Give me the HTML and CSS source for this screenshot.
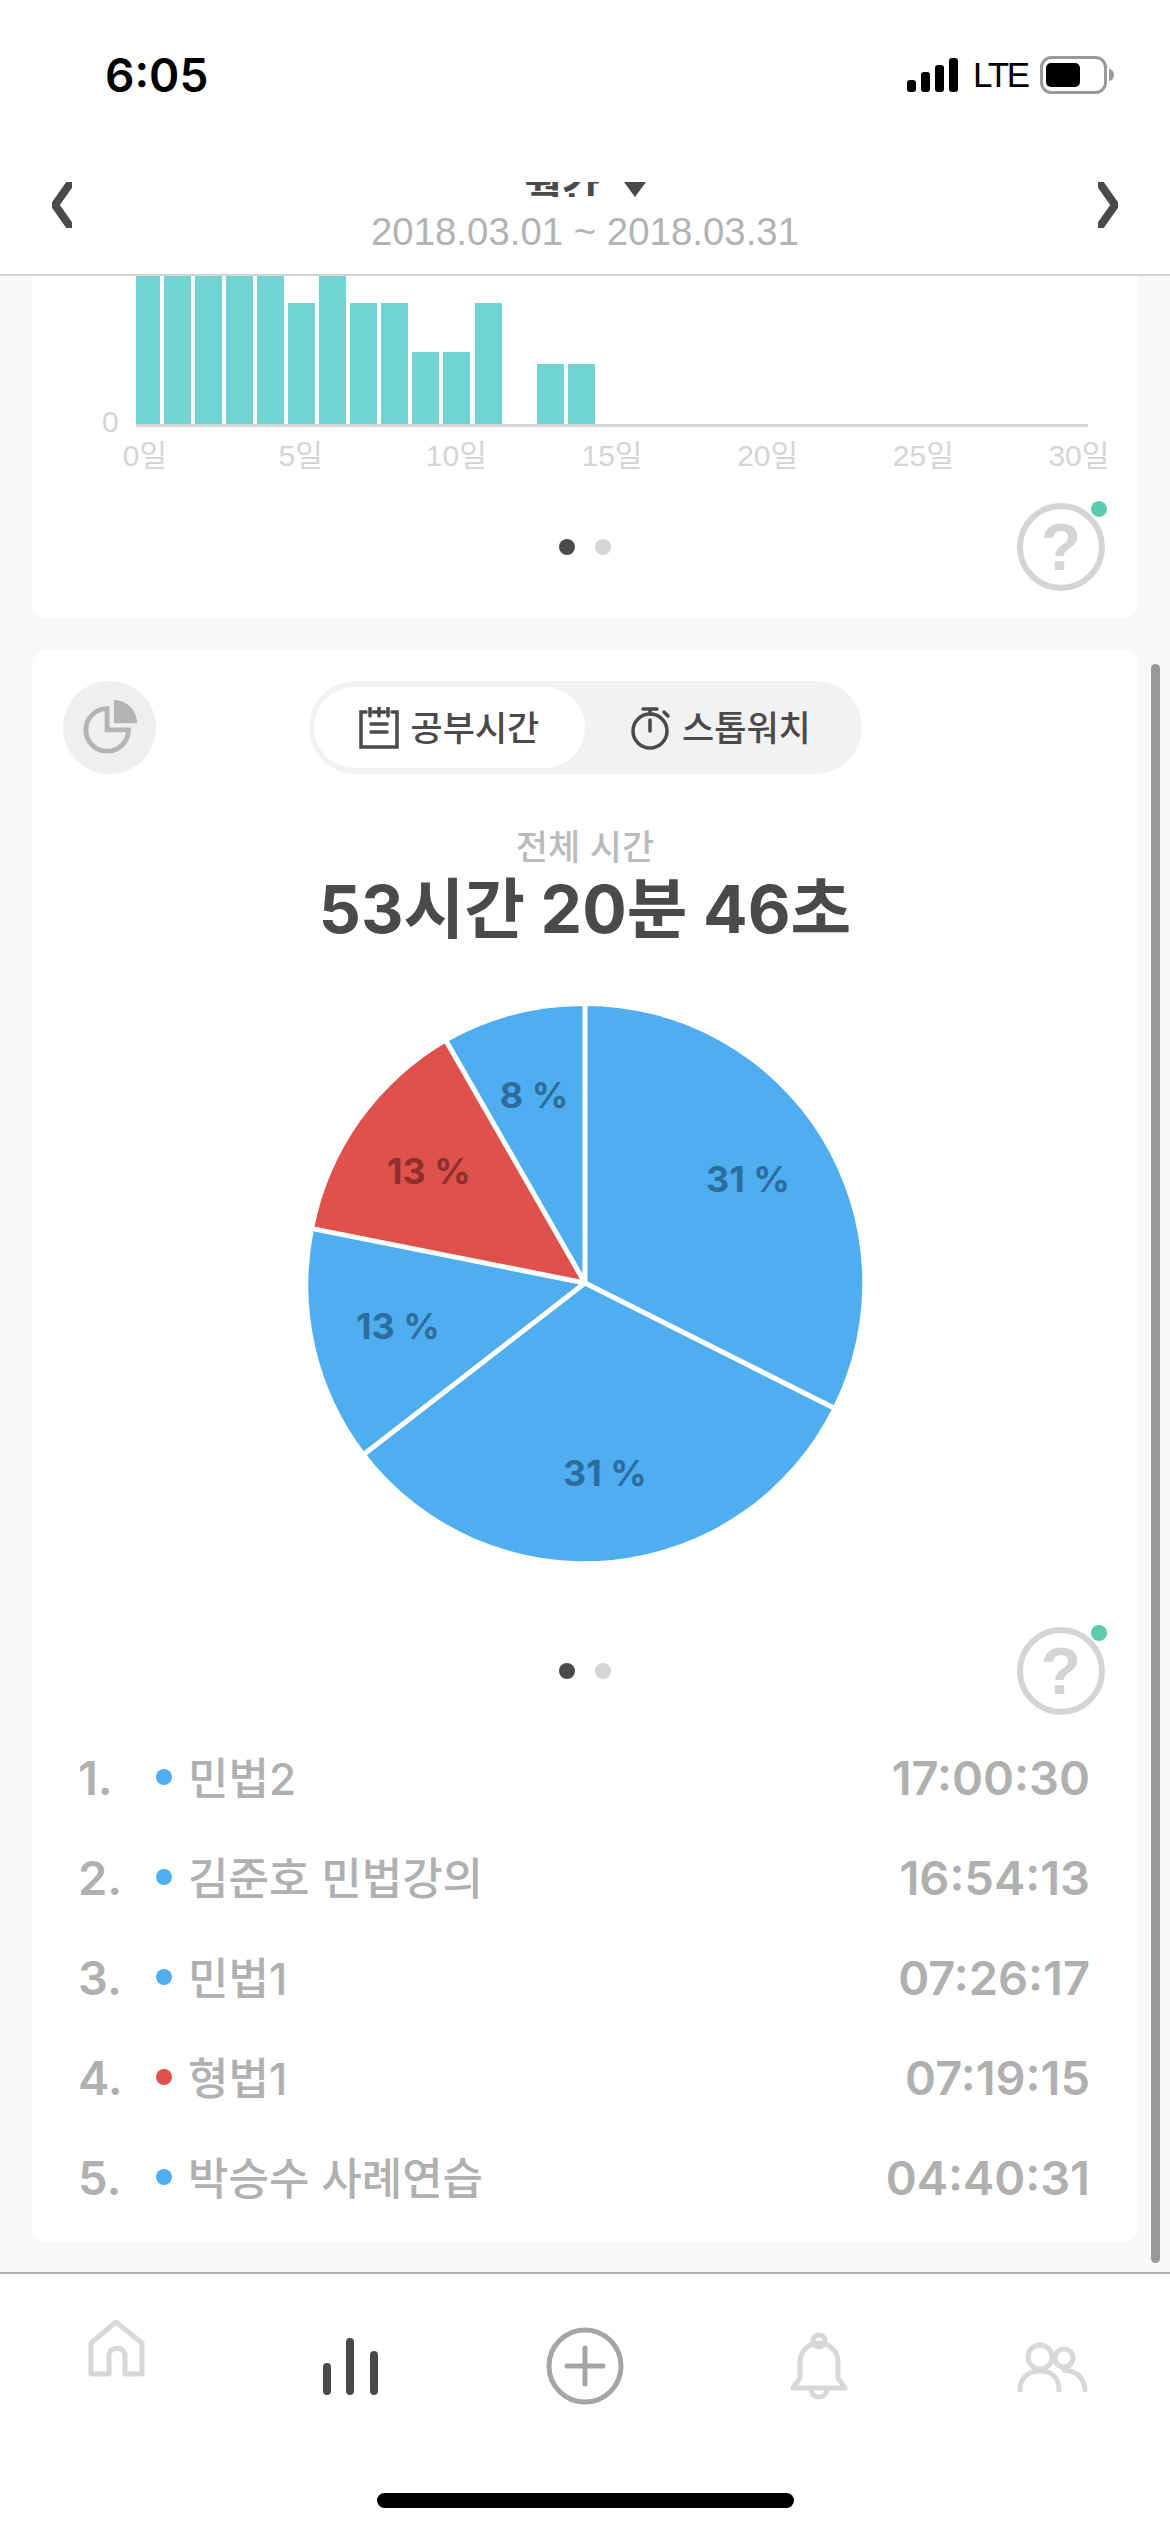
FILE: index.html
```html
<!DOCTYPE html>
<html lang="ko">
<head>
<meta charset="utf-8">
<title>월간 통계</title>
<link rel="stylesheet" href="styles.css">
</head>
<body>
<div class="app">
  <header class="status">
    <span class="clock">6:05</span>
    <div class="status-right">
      <svg class="signal" width="52" height="36" viewBox="0 0 52 36"><rect x="0" y="23" width="9" height="12" rx="3"/><rect x="14" y="15" width="9" height="20" rx="3"/><rect x="28" y="8" width="9" height="27" rx="3"/><rect x="42" y="1" width="9" height="34" rx="3"/></svg>
      <span class="lte">LTE</span>
      <svg class="battery" width="74" height="38" viewBox="0 0 74 38"><rect x="1.5" y="1.5" width="64" height="35" rx="10" fill="none" stroke="#999" stroke-width="3"/><rect x="6" y="7" width="34" height="24" rx="5" fill="#000"/><path d="M69 13 a5 6 0 0 1 0 12 z" fill="#999"/></svg>
    </div>
  </header>

  <nav class="nav">
    <svg class="chev" width="20" height="46" viewBox="0 0 20 46"><path d="M17 3 L3 23 L17 43"/></svg>
    <div class="nav-center">
      <div class="nav-title"><span>월간</span><svg width="22" height="15" viewBox="0 0 22 15"><path d="M0 0H22L11 15Z" fill="#4a4a4a"/></svg></div>
      <div class="nav-date">2018.03.01 ~ 2018.03.31</div>
    </div>
    <svg class="chev" width="20" height="46" viewBox="0 0 20 46"><path d="M3 3 L17 23 L3 43"/></svg>
  </nav>

  <main class="scroll">
    <section class="card card-chart">
      <div class="plot-row">
        <span class="y-zero">0</span>
        <div class="plot">
          <i class="bar first" style="height:240px"></i>
          <i class="bar" style="height:240px"></i>
          <i class="bar" style="height:240px"></i>
          <i class="bar" style="height:240px"></i>
          <i class="bar" style="height:240px"></i>
          <i class="bar" style="height:121px"></i>
          <i class="bar" style="height:240px"></i>
          <i class="bar" style="height:121px"></i>
          <i class="bar" style="height:121px"></i>
          <i class="bar" style="height:72px"></i>
          <i class="bar" style="height:72px"></i>
          <i class="bar" style="height:121px"></i>
          <i class="bar" style="height:0"></i>
          <i class="bar" style="height:60px"></i>
          <i class="bar" style="height:60px"></i>
        </div>
      </div>
      <div class="x-axis"><span>0일</span><span>5일</span><span>10일</span><span>15일</span><span>20일</span><span>25일</span><span>30일</span></div>
      <div class="pager pager-first">
        <span></span>
        <div class="dots"><i class="dot on"></i><i class="dot"></i></div>
        <div class="help">?<i class="help-badge"></i></div>
      </div>
    </section>

    <section class="card card-main">
      <div class="head">
        <div class="pie-btn">
          <svg width="58" height="58" viewBox="0 0 60 60"><path d="M26 11 A22 22 0 1 0 48 33 H26 Z" fill="none" stroke="#b4b4b4" stroke-width="5"/><path d="M33 2 A24 24 0 0 1 57 26 H33 Z" fill="#b4b4b4"/></svg>
        </div>
        <div class="seg">
          <div class="seg-item active">
            <svg width="42" height="42" viewBox="0 0 42 42" class="ico"><path d="M8 5H3V40H39V5H34M15 5H27"/><path d="M12 1V9M21 1V9M30 1V9" /><path d="M13 17H29M13 25H29"/></svg>
            <span>공부시간</span>
          </div>
          <div class="seg-item">
            <svg width="42" height="44" viewBox="0 0 42 44" class="ico"><circle cx="21" cy="25" r="17"/><path d="M21 25V14M21 3V8M14 3H28M35 6L39 10"/></svg>
            <span>스톱워치</span>
          </div>
        </div>
        <span></span>
      </div>

      <div class="caption">전체 시간</div>
      <div class="total">53시간 20분 46초</div>

      <svg class="pie" width="560" height="560" viewBox="0 0 560 560">
        <path class="blue" d="M280 280 L280 3 A277 277 0 0 1 528 404 Z"/>
        <path class="blue" d="M280 280 L528 404 A277 277 0 0 1 60 450 Z"/>
        <path class="blue" d="M280 280 L60 450 A277 277 0 0 1 9 226 Z"/>
        <path class="red" d="M280 280 L9 226 A277 277 0 0 1 142 39 Z"/>
        <path class="blue" d="M280 280 L142 39 A277 277 0 0 1 280 3 Z"/>
        <path class="cuts" d="M280 0V280M280 280L531 406M280 280L58 452M280 280L6 225.4M280 280L140 36"/>
        <text class="pl" x="443" y="189">31 %</text>
        <text class="pl" x="300" y="483">31 %</text>
        <text class="pl" x="93" y="336">13 %</text>
        <text class="pl dark" x="124" y="181">13 %</text>
        <text class="pl" x="229" y="105">8 %</text>
      </svg>

      <div class="pager pager-second">
        <span></span>
        <div class="dots"><i class="dot on"></i><i class="dot"></i></div>
        <div class="help">?<i class="help-badge"></i></div>
      </div>

      <ol class="rank">
        <li class="row"><span class="num">1.</span><i class="mark m-blue"></i><span class="name">민법2</span><span class="time">17:00:30</span></li>
        <li class="row"><span class="num">2.</span><i class="mark m-blue"></i><span class="name">김준호 민법강의</span><span class="time">16:54:13</span></li>
        <li class="row"><span class="num">3.</span><i class="mark m-blue"></i><span class="name">민법1</span><span class="time">07:26:17</span></li>
        <li class="row"><span class="num">4.</span><i class="mark m-red"></i><span class="name">형법1</span><span class="time">07:19:15</span></li>
        <li class="row"><span class="num">5.</span><i class="mark m-blue"></i><span class="name">박승수 사례연습</span><span class="time">04:40:31</span></li>
      </ol>
    </section>
    <div class="scrollbar"></div>
  </main>

  <footer class="tabs">
    <div class="tab-row">
      <svg class="tab soft" width="80" height="100" viewBox="0 0 80 100"><path d="M14 58 V27 L39 6 L65 27 V58 H48 V38 A8.5 8.5 0 0 0 32 38 V58 Z"/></svg>
      <svg class="tab bars" width="80" height="100" viewBox="0 0 80 100"><path d="M16 51V75M39 26V75M63 39V75"/></svg>
      <svg class="tab plus" width="80" height="100" viewBox="0 0 80 100"><circle cx="40" cy="50" r="36"/><path d="M40 32V68M22 50H58"/></svg>
      <svg class="tab soft" width="80" height="100" viewBox="0 0 80 100"><circle cx="40" cy="25" r="6"/><path d="M21 62 V46 A19 19 0 0 1 59 46 V62 L66 72 H14 Z"/><path d="M32 73 A8 8 0 0 0 48 73"/></svg>
      <svg class="tab soft" width="80" height="100" viewBox="0 0 80 100"><circle cx="27" cy="41" r="12"/><circle cx="51" cy="42" r="9"/><path d="M7 74 C7 62 15 55 27 55 C39 55 46 62 46 74"/><path d="M51 54 C64 55 71 62 72 74"/></svg>
    </div>
    <div class="home-bar"></div>
  </footer>
</div>
</body>
</html>
```

FILE: styles.css
```css
* { box-sizing: border-box; }
html, body { margin: 0; padding: 0; background: #fff; }
body {
  width: 1170px;
  height: 2532px;
  overflow: hidden;
  font-family: "Liberation Sans", "Noto Sans CJK KR", sans-serif;
  color: #4a4a4a;
}
.app { display: flex; flex-direction: column; height: 2532px; }

/* status bar */
.status {
  height: 170px;
  flex: none;
  display: flex;
  justify-content: space-between;
  align-items: center;
  padding: 0 56px 20px 105px;
}
.clock { font-family: Inter, sans-serif; font-size: 46px; font-weight: 600; color: #000; line-height: 50px; }
.status-right { display: flex; align-items: center; }
.signal { fill: #000; margin-right: 14px; }
.lte { font-size: 35px; letter-spacing: -2.2px; color: #000; line-height: 40px; margin-right: 12px; }

/* nav */
.nav {
  height: 106px;
  flex: none;
  display: flex;
  justify-content: space-between;
  align-items: flex-start;
  padding: 12px 52px 0;
  border-bottom: 2px solid #d5d5d5;
}
.chev path { fill: none; stroke: #4a4a4a; stroke-width: 8; stroke-linecap: round; stroke-linejoin: round; }
.nav-center { flex: 1; text-align: center; }
.nav-title {
  height: 15px;
  display: flex;
  justify-content: center;
  align-items: flex-start;
  gap: 24px;
  overflow: hidden;
  font-size: 41px;
  font-weight: 700;
  line-height: 15px;
}
.nav-date { margin-top: 13px; font-size: 38.4px; line-height: 44px; color: #b3b3b3; }

/* scroll area */
.scroll {
  flex: 1;
  position: relative;
  background: #f8f8f8;
  padding: 0 32px;
  overflow: hidden;
}
.card { background: #fff; border-radius: 14px; }
.card-chart { height: 342px; border-radius: 0 0 14px 14px; overflow: hidden; }
.card-main { margin-top: 32px; height: 1592px; }
.scrollbar {
  position: absolute;
  left: 1151px;
  top: 388px;
  width: 9px;
  height: 1599px;
  border-radius: 5px;
  background: #999;
}

/* chart */
.plot-row { display: flex; align-items: flex-end; height: 151px; padding-left: 70px; }
.y-zero { width: 34px; font-size: 30px; line-height: 24px; margin-bottom: -7px; color: #d5d5d5; }
.plot {
  width: 952px;
  height: 151px;
  display: flex;
  align-items: flex-end;
  gap: 4.1px;
  overflow: hidden;
  border-bottom: 3px solid #d5d5d5;
}
.bar { display: block; width: 27px; flex: none; background: #72d4d2; }
.bar.first { margin-left: -3.5px; }
.x-axis {
  display: flex;
  justify-content: space-between;
  margin: 9px 0 0 63px;
  width: 1034px;
  font-size: 30px;
  line-height: 40px;
  color: #d5d5d5;
}
.x-axis span { width: 100px; text-align: center; }

/* pager + help */
.pager {
  display: grid;
  grid-template-columns: 1fr auto 1fr;
  align-items: center;
  height: 88px;
  padding-right: 33px;
  padding-left: 33px;
}
.pager-first { margin-top: 27px; }
.pager-second { margin-top: 64px; }
.dots { display: flex; gap: 20px; }
.dot { display: block; width: 16px; height: 16px; border-radius: 50%; background: #d5d5d5; }
.dot.on { background: #4a4a4a; }
.help {
  justify-self: end;
  position: relative;
  width: 88px;
  height: 88px;
  border: 6px solid #d5d5d5;
  border-radius: 50%;
  color: #d5d5d5;
  font-size: 66px;
  font-weight: 700;
  line-height: 76px;
  text-align: center;
}
.help-badge {
  position: absolute;
  right: -8px;
  top: -8px;
  width: 16px;
  height: 16px;
  border-radius: 50%;
  background: #5ecbb0;
}

/* head */
.head {
  display: grid;
  grid-template-columns: 1fr 553px 1fr;
  align-items: center;
  padding: 31px 31px 0;
}
.pie-btn {
  width: 93px;
  height: 93px;
  border-radius: 50%;
  background: #efefef;
  display: flex;
  align-items: center;
  justify-content: center;
  padding: 0 0 2px 3px;
}
.seg {
  height: 93px;
  border-radius: 47px;
  background: #f2f2f2;
  padding: 6px 5px;
  display: flex;
}
.seg-item {
  flex: 1;
  border-radius: 41px;
  display: flex;
  align-items: center;
  gap: 11px;
  padding-left: 44px;
  font-size: 35px;
  font-weight: 500;
  color: #4a4a4a;
}
.seg-item span { margin-bottom: 5px; }
.seg-item.active { background: #fff; }
.ico { fill: none; stroke: #4a4a4a; stroke-width: 3.5; stroke-linecap: round; }

.caption { margin-top: 54px; text-align: center; font-size: 35px; font-weight: 500; line-height: 40px; color: #bbb; }
.total { margin-top: 1px; text-align: center; font-family: Inter, "Noto Sans CJK KR", sans-serif; font-size: 66px; font-weight: 700; line-height: 80px; color: #4a4a4a; }
.pie { display: block; margin: 54px auto 0; }
.blue { fill: #4faeef; }
.red { fill: #e0514b; }
.cuts { fill: none; stroke: #fff; stroke-width: 5; }
.pl { font-family: Inter, sans-serif; font-size: 36px; font-weight: 700; fill: #2c6d9e; text-anchor: middle; }
.pl.dark { fill: #8e2f2c; }

/* list */
.rank { list-style: none; margin: 12px 0 0; padding: 0 48px; }
.row { display: flex; align-items: center; height: 100px; font-family: Inter, "Noto Sans CJK KR", sans-serif; font-size: 44px; font-weight: 500; color: #b0b0b0; }
.num { width: 76px; font-size: 47px; font-weight: 600; margin-left: -2px; margin-right: 2px; }
.mark { display: block; width: 16px; height: 16px; border-radius: 50%; margin-right: 16px; }
.m-blue { background: #4faeef; }
.m-red { background: #e0514b; }
.name { flex: 1; margin-bottom: 3px; }
.time { font-size: 47px; font-weight: 600; }

/* tab bar */
.tabs { height: 260px; flex: none; border-top: 2px solid #b0b0b0; background: #fff; padding-top: 42px; }
.tab-row { display: grid; grid-template-columns: repeat(5, 1fr); justify-items: center; height: 100px; }
.tab { fill: none; stroke-linecap: round; stroke-linejoin: round; }
.soft { stroke: #d8d8d8; stroke-width: 5; }
.bars { stroke: #4a4a4a; stroke-width: 8; }
.plus { stroke: #a5a5a5; stroke-width: 5; }
.home-bar { width: 417px; height: 15px; margin: 77px auto 0; border-radius: 8px; background: #000; }
```
